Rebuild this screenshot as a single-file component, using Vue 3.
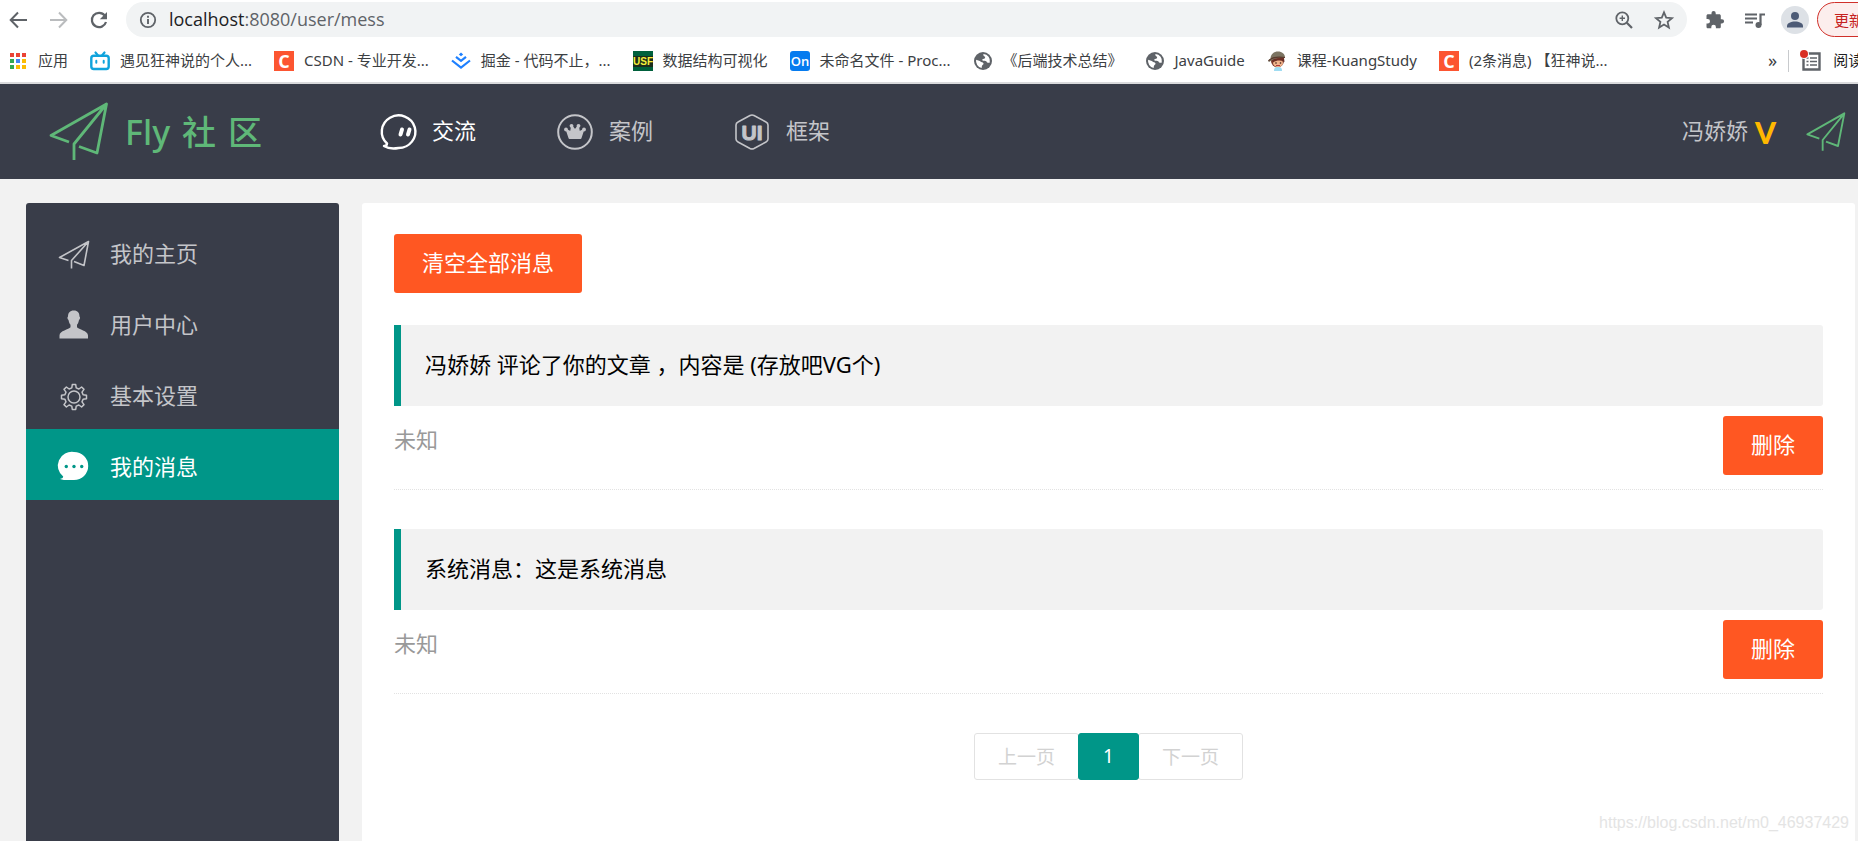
<script setup>
import { ref } from 'vue'

const bookmarks = [
  { icon: 'apps', label: '应用' },
  { icon: 'tv', label: '遇见狂神说的个人...' },
  { icon: 'csdn', label: 'CSDN - 专业开发...' },
  { icon: 'juejin', label: '掘金 - 代码不止，...' },
  { icon: 'usf', label: '数据结构可视化' },
  { icon: 'on', label: '未命名文件 - Proc...' },
  { icon: 'globe', label: '《后端技术总结》' },
  { icon: 'globe', label: 'JavaGuide' },
  { icon: 'boy', label: '课程-KuangStudy' },
  { icon: 'csdn', label: '(2条消息) 【狂神说...' }
]

const appColors = ['#ea4335', '#ea4335', '#ea4335', '#34a853', '#4285f4', '#fbbc04', '#34a853', '#fbbc04', '#fbbc04']

const sideItems = [
  { icon: 'plane', label: '我的主页' },
  { icon: 'user', label: '用户中心' },
  { icon: 'gear', label: '基本设置' },
  { icon: 'chat', label: '我的消息', active: true }
]

const messages = ref([
  { id: 1, text: '冯娇娇 评论了你的文章 ，内容是 (存放吧VG个)', time: '未知' },
  { id: 2, text: '系统消息：这是系统消息', time: '未知' }
])

function remove(id) {
  messages.value = messages.value.filter((m) => m.id !== id)
}

function gearPath(cx, cy, outer, inner) {
  const teeth = 8
  const step = (Math.PI * 2) / teeth
  const pts = []
  for (let i = 0; i < teeth; i++) {
    const a = i * step - Math.PI / 2
    for (const [off, r] of [[-0.3, inner], [-0.17, outer], [0.17, outer], [0.3, inner]]) {
      const t = a + off * step
      pts.push(`${(cx + r * Math.cos(t)).toFixed(1)} ${(cy + r * Math.sin(t)).toFixed(1)}`)
    }
  }
  return `M${pts.join('L')}Z`
}
const gear = gearPath(16, 16, 12.6, 9.4)
</script>

<template>
  <div class="window">
    <div class="browser">
      <div class="toolbar">
        <div class="nav-buttons">
          <button class="icon-btn" aria-label="后退">
            <svg viewBox="0 0 20 20"><path d="M19 10H3M10 2.5L2.7 10l7.3 7.5" fill="none" stroke="#5f6368" stroke-width="2" /></svg>
          </button>
          <button class="icon-btn" aria-label="前进">
            <svg viewBox="0 0 20 20"><path d="M2 10h16M11 2.5l7.3 7.5-7.3 7.5" fill="none" stroke="#babcbe" stroke-width="2" /></svg>
          </button>
          <button class="icon-btn" aria-label="重新加载">
            <svg viewBox="0 0 20 20"><path d="M16.8 5.6A7.2 7.2 0 1 0 18 12" fill="none" stroke="#5f6368" stroke-width="2.2" /><path d="M19 2v7.2h-7.2z" fill="#5f6368" /></svg>
          </button>
        </div>
        <div class="omnibox">
          <svg class="info" viewBox="0 0 18 18"><circle cx="9" cy="9" r="7.2" fill="none" stroke="#5f6368" stroke-width="1.8" /><path d="M9 8v5M9 4.8v2" stroke="#5f6368" stroke-width="1.9" /></svg>
          <div class="address"><span class="host">localhost</span><span>:8080/user/mess</span></div>
          <button class="icon-btn" aria-label="缩放">
            <svg viewBox="0 0 20 20" fill="none" stroke="#5f6368"><circle cx="8.3" cy="8.3" r="6" stroke-width="1.8" /><path d="M12.8 12.8l5.2 5.2" stroke-width="2.2" /><path d="M5.6 8.3h5.4M8.3 5.6v5.4" stroke-width="1.4" /></svg>
          </button>
          <button class="icon-btn" aria-label="为此标签页添加书签">
            <svg viewBox="0 0 20 20"><path d="M10 2.3l2.2 5.3 5.8.5-4.4 3.8 1.3 5.7L10 14.6l-4.9 3 1.3-5.7L2 8.1l5.8-.5z" fill="none" stroke="#5f6368" stroke-width="1.8" /></svg>
          </button>
        </div>
        <div class="tools">
          <button class="icon-btn" aria-label="扩展程序">
            <svg viewBox="0 0 20 20"><path d="M17 9.200h-1.200V5.800c0-.9-.7-1.600-1.600-1.600h-3.500V3a2.100 2.100 0 0 0-4.200 0v1.200H3.100c-.9 0-1.600.7-1.600 1.600v3.100h1.200a2.300 2.300 0 0 1 0 4.600H1.500v3.200c0 .9.700 1.600 1.600 1.600h3.200v-1.200a2.300 2.300 0 0 1 4.600 0v1.200h3.300c.9 0 1.600-.7 1.600-1.600v-3.300H17a2.100 2.100 0 0 0 0-4.200z" fill="#5f6368" /></svg>
          </button>
          <button class="icon-btn" aria-label="媒体控制">
            <svg viewBox="0 0 20 20"><path d="M0 4.500h12M0 8.500h12M0 12.500h8" stroke="#5f6368" stroke-width="2" /><path d="M15.500 15V4.500h4.500" fill="none" stroke="#5f6368" stroke-width="2.200" /><circle cx="13.500" cy="15" r="3" fill="#5f6368" /></svg>
          </button>
          <button class="avatar" aria-label="个人资料">
            <svg viewBox="0 0 28 28"><circle cx="14" cy="14" r="14" fill="#dde1e6" /><circle cx="14" cy="10" r="4" fill="#4d5b76" /><path d="M6 21.500v-1.500c0-3 4-4.500 8-4.500s8 1.500 8 4.500v1.500z" fill="#4d5b76" /></svg>
          </button>
          <button class="update">更新</button>
        </div>
      </div>

      <nav class="bookmarks">
        <a v-for="b in bookmarks" :key="b.label" href="#" class="bookmark">
          <svg viewBox="0 0 20 20">
            <template v-if="b.icon === 'apps'">
              <rect v-for="(c, i) in appColors" :key="i" :x="2 + (i % 3) * 6" :y="2 + Math.floor(i / 3) * 6" width="4" height="4" :fill="c" />
            </template>
            <g v-else-if="b.icon === 'tv'" fill="none" stroke="#0fa3dc" stroke-linecap="round">
              <rect x="1.300" y="4.800" width="17.400" height="13.200" rx="2.500" stroke-width="2.400" />
              <path d="M5.500 1.500l2.500 3M14.500 1.500l-2.500 3" stroke-width="2.200" />
              <path d="M6.300 9.800v2M13.700 9.800v2" stroke-width="2" />
            </g>
            <g v-else-if="b.icon === 'csdn'">
              <rect width="20" height="20" fill="#fc5531" />
              <text x="10" y="16.500" text-anchor="middle" fill="#fff" class="mark-c">C</text>
            </g>
            <g v-else-if="b.icon === 'juejin'" fill="none" stroke="#1e80ff" stroke-width="2.200">
              <path d="M10 1.500l2.200 2-2.200 1.800-2.200-1.800z" fill="#1e80ff" stroke="none" />
              <path d="M5 5.800l5 4 5-4M1 9.500l9 7.200 9-7.200" />
            </g>
            <g v-else-if="b.icon === 'usf'">
              <rect width="20" height="20" fill="#00603c" />
              <rect y="5" width="20" height="11" fill="#1c2d1c" />
              <text x="10" y="14" text-anchor="middle" fill="#f5f03a" class="mark-usf">USF</text>
            </g>
            <g v-else-if="b.icon === 'on'">
              <rect width="20" height="20" rx="3" fill="#067bef" />
              <text x="10" y="15" text-anchor="middle" fill="#fff" class="mark-on">On</text>
            </g>
            <g v-else-if="b.icon === 'globe'">
              <circle cx="10" cy="10" r="9" fill="#5f6368" />
              <path d="M10.500 3a7 7 0 0 1 6.300 8.500c-1.500.8-2.800.2-3.500-1.200-.9-.6-2.500-.2-3.800-.8-.7-1 .2-1.700 1.500-1.800 1.100-.3 1.200-1.200 1.100-2C10.500 5.400 10 4 10.500 3zM3.100 8.800l3.700 1.300c.8.800 1.800 1.200 3 1.400 1.200.8.900 1.900-.3 2.400-.8.800-.6 1.800-.9 3A7 7 0 0 1 3.100 8.800z" fill="#fff" />
            </g>
            <g v-else>
              <circle cx="10.500" cy="10" r="6.500" fill="#7d3a2b" />
              <ellipse cx="11" cy="12" rx="5" ry="4" fill="#f2b48c" />
              <path d="M5 8l12-1 .5 4C14 9 10 9 6 11.500z" fill="#6b2f25" />
              <path d="M3.500 8C3.500 3 7 .5 11 .5S18 3 18 6.500l-5 0-6 1.500-5 3c-1.500-1.500 0-3 1.500-3z" fill="#7c7462" />
              <path d="M1.500 10c3-4 9-4.500 16.500-3.500" fill="none" stroke="#5a3a2c" stroke-width="1.200" />
              <circle cx="9" cy="12" r=".8" fill="#3a1c16" /><circle cx="13.500" cy="12" r=".8" fill="#3a1c16" />
              <path d="M9 14.500h4" stroke="#b03a3a" />
              <path d="M7 20c0-3 1-4 4-4s4 1 4 4z" fill="#9fdcf2" />
            </g>
          </svg>
          <span>{{ b.label }}</span>
        </a>
        <div class="reading">
          <button class="more" aria-label="更多书签">»</button>
          <button class="reading-list">
            <svg viewBox="0 0 22 22"><path d="M3.500 3.500h16v16h-16z" fill="none" stroke="#5f6368" stroke-width="2.400" /><path d="M10 8h7M10 11.500h7M10 15h7M6.500 8h2M6.500 11.500h2M6.500 15h2" stroke="#5f6368" stroke-width="1.600" /><circle cx="4" cy="4" r="5" fill="#fff" /><circle cx="4" cy="4" r="4" fill="#d93025" /></svg>
            <span>阅读</span>
          </button>
        </div>
      </nav>
    </div>

    <header class="header">
      <a href="#" class="logo">
        <svg viewBox="0 0 60 60"><path d="M20 40L2 33.500 57.500 2 48 51 30 44.500M25 58V42L57.500 2" fill="none" stroke="#5fb878" stroke-width="2.800" stroke-linejoin="round" /></svg>
        <span>Fly</span><span>社</span><span>区</span>
      </a>
      <nav class="menu">
        <a href="#" class="menu-item active">
          <svg viewBox="0 0 36 36" fill="none" stroke="currentColor" stroke-linecap="round" stroke-linejoin="round">
            <path d="M7 29.500A16.800 16.300 0 1 1 18.500 34C13 35 8 34.500 4 32c2 0 3-1 3-2.500" stroke-width="2.400" />
            <path d="M22 15.500l-1.500 5M29.500 15.500L28 20.500" stroke-width="4" />
          </svg>
          <span>交流</span>
        </a>
        <a href="#" class="menu-item">
          <svg viewBox="0 0 36 36">
            <circle cx="18" cy="18" r="16.800" fill="none" stroke="currentColor" stroke-width="2" />
            <path d="M12.500 24L10 16.500l4 2 1-6 3 4 3-4 1 6 4-2L23.500 24z" fill="currentColor" stroke="currentColor" stroke-width="2" stroke-linejoin="round" />
            <g fill="currentColor"><circle cx="9" cy="15.500" r="1.900" /><circle cx="14.500" cy="11.800" r="1.900" /><circle cx="21.500" cy="11.800" r="1.900" /><circle cx="27" cy="15.500" r="1.900" /></g>
          </svg>
          <span>案例</span>
        </a>
        <a href="#" class="menu-item">
          <svg viewBox="0 0 36 36">
            <path d="M16 1.500q2-1 4 0l12 6.500q2 1 2 3v14q0 2-2 3l-12 6.500q-2 1-4 0l-12-6.500q-2-1-2-3V11q0-2 2-3z" fill="none" stroke="currentColor" stroke-width="1.600" />
            <text x="18" y="25.500" text-anchor="middle" class="mark-ui">UI</text>
          </svg>
          <span>框架</span>
        </a>
      </nav>
      <div class="account">
        <a href="#" class="user"><span>冯娇娇</span><b class="vip">V</b></a>
        <a href="#" class="user-pic" aria-label="头像">
          <svg viewBox="0 0 60 60"><path d="M20 40L2 33.500 57.500 2 48 51 30 44.500M25 58V42L57.500 2" fill="none" stroke="#5fb878" stroke-width="2.800" stroke-linejoin="round" /></svg>
        </a>
      </div>
    </header>

    <main class="page">
      <nav class="side">
        <a v-for="s in sideItems" :key="s.label" href="#" class="side-item" :class="{ active: s.active }">
          <svg viewBox="0 0 32 32">
            <path v-if="s.icon === 'plane'" d="M10.500 21.500L1.500 18.500 30.500 2.500 26 26.500 16 22.500M13.500 29.500V21.500L30.500 2.500" fill="none" stroke="currentColor" stroke-width="1.600" stroke-linejoin="round" />
            <path v-else-if="s.icon === 'user'" d="M15.800.5c4 0 5.700 2.500 5.700 6 1 .5.600 3-.5 3.500-.4 2.300-1.200 3.800-2 4.800v2.400c1.500 2.300 11 3.300 11 8.300v3H1.500v-3c0-5 9.500-6 11-8.300v-2.400c-.8-1-1.600-2.500-2-4.800-1.100-.5-1.500-3-.5-3.500 0-3.500 1.800-6 5.800-6z" fill="currentColor" />
            <g v-else-if="s.icon === 'gear'" fill="none" stroke="currentColor" stroke-width="1.500" stroke-linejoin="round">
              <path :d="gear" /><circle cx="16" cy="16" r="6" />
            </g>
            <template v-else>
              <path d="M16 0a14 13.800 0 0 1 0 28C11 28 6 28.500 2 27c2-.5 3-1 3.200-2.500A14 13.800 0 0 1 16 0z" fill="currentColor" />
              <g fill="#009688"><circle cx="8.300" cy="14.500" r="1.700" /><circle cx="16" cy="14.500" r="1.700" /><circle cx="23.700" cy="14.500" r="1.700" /></g>
            </template>
          </svg>
          <span>{{ s.label }}</span>
        </a>
      </nav>

      <section class="panel">
        <button class="btn" @click="messages = []">清空全部消息</button>
        <ul class="messages">
          <li v-for="m in messages" :key="m.id">
            <blockquote>{{ m.text }}</blockquote>
            <div class="meta">
              <span>{{ m.time }}</span>
              <button class="btn" @click="remove(m.id)">删除</button>
            </div>
          </li>
        </ul>
        <div class="pager">
          <button disabled>上一页</button>
          <button class="current">1</button>
          <button disabled>下一页</button>
        </div>
        <div class="watermark">https://blog.csdn.net/m0_46937429</div>
      </section>
    </main>
  </div>
</template>

<style>
body {
  margin: 0;
  background: #f2f2f2;
}
</style>

<style scoped>
* {
  box-sizing: border-box;
}
.window {
  display: flex;
  flex-direction: column;
  min-height: 100vh;
  overflow: hidden;
  font-family: "Noto Sans", "Noto Sans CJK SC", sans-serif;
  font-size: 22px;
  white-space: nowrap;
}
a {
  color: inherit;
  text-decoration: none;
}
button {
  margin: 0;
  padding: 0;
  border: 0;
  background: none;
  font: inherit;
  color: inherit;
  cursor: pointer;
}
svg {
  display: block;
  flex: none;
  overflow: visible;
}

/* browser bar */
.browser {
  background: #fff;
  border-bottom: 2px solid #d9dadc;
  color: #3c4043;
  font-size: 15px;
}
.toolbar {
  display: flex;
  align-items: center;
  gap: 18px;
  height: 39px;
  padding-left: 8px;
}
.nav-buttons {
  display: flex;
  gap: 20px;
}
.icon-btn,
.icon-btn svg {
  display: block;
  flex: none;
  width: 20px;
  height: 20px;
}
.omnibox {
  display: flex;
  flex: 1;
  align-items: center;
  gap: 20px;
  height: 35px;
  padding: 0 13px;
  border-radius: 18px;
  background: #f1f3f4;
}
.info {
  width: 18px;
  height: 18px;
}
.address {
  flex: 1;
  margin-left: -8px;
  padding-bottom: 2px;
  color: #5f6368;
  font-family: "Open Sans", sans-serif;
  font-size: 18px;
  line-height: 24px;
}
.host {
  color: #202124;
}
.tools {
  display: flex;
  align-items: center;
  width: 153px;
  overflow: hidden;
}
.tools .icon-btn {
  margin-right: 20px;
}
.tools .icon-btn + .icon-btn {
  margin-right: 16px;
}
.avatar {
  flex: none;
  width: 28px;
  height: 28px;
  margin-right: 8px;
}
.update {
  flex: none;
  width: 80px;
  height: 35px;
  padding-left: 16px;
  border: 1px solid #d0302a;
  border-radius: 18px;
  background: #fceeed;
  color: #c5221f;
  text-align: left;
}
.bookmarks {
  display: flex;
  align-items: center;
  gap: 22px;
  height: 43px;
  padding-left: 8px;
  line-height: 20px;
}
.bookmark {
  display: flex;
  align-items: center;
  gap: 10px;
}
.bookmark span,
.reading-list span {
  padding-bottom: 2px;
}
.bookmark svg {
  width: 20px;
  height: 20px;
}
.mark-c {
  font: 700 18px "Open Sans", sans-serif;
}
.mark-usf {
  font: 700 10px "Liberation Sans Narrow", "Liberation Sans", sans-serif;
}
.mark-on {
  font: 600 13px "Open Sans", sans-serif;
}
.reading {
  display: flex;
  align-items: center;
  width: 90px;
  margin-left: auto;
  overflow: hidden;
}
.more {
  width: 12px;
  margin-right: 11px;
  padding-bottom: 2px;
  font-size: 18px;
  line-height: 20px;
}
.reading-list {
  display: flex;
  align-items: center;
  gap: 11px;
  padding-left: 11px;
  border-left: 1px solid #c8cacd;
  color: #202124;
}
.reading-list svg {
  width: 22px;
  height: 22px;
}

/* site header */
.header {
  display: flex;
  align-items: center;
  height: 95px;
  padding: 0 12px 0 49px;
  background: #393d49;
  color: #c4c5c9;
}
.logo {
  display: flex;
  align-items: center;
  gap: 12px;
  width: 331px;
  color: #5fb878;
  font-size: 34px;
  font-weight: 500;
  line-height: 40px;
}
.logo svg {
  width: 60px;
  height: 60px;
  margin-right: 4px;
}
.menu {
  display: flex;
  gap: 81px;
}
.menu-item {
  display: flex;
  align-items: center;
  gap: 16px;
  line-height: 32px;
}
.menu-item span {
  padding-bottom: 4px;
}
.menu-item svg {
  width: 36px;
  height: 36px;
}
.menu-item.active {
  color: #fff;
}
.mark-ui {
  font: 700 21px "Liberation Sans", sans-serif;
  fill: currentColor;
  stroke: currentColor;
  stroke-width: 1;
  stroke-linejoin: round;
}
.account {
  display: flex;
  align-items: center;
  gap: 30px;
  margin-left: auto;
}
.user {
  display: flex;
  align-items: center;
  gap: 7px;
  line-height: 32px;
}
.user span {
  padding-bottom: 4px;
}
.vip {
  color: #ffb800;
  font-family: Lato, sans-serif;
  font-size: 30px;
  font-weight: 900;
  line-height: 32px;
}
.user-pic svg {
  width: 40px;
  height: 40px;
}

/* page */
.page {
  display: flex;
  flex: 1;
  gap: 23px;
  padding: 24px 3px 0 26px;
  background: #f2f2f2;
}
.side {
  flex: none;
  width: 313px;
  padding-top: 13px;
  border-radius: 3px 3px 0 0;
  background: #393d49;
  color: #c4c5c9;
}
.side-item {
  display: flex;
  align-items: center;
  gap: 20px;
  height: 71px;
  padding-left: 32px;
}
.side-item svg {
  width: 32px;
  height: 32px;
  margin-top: 6px;
}
.side-item.active {
  background: #009688;
  color: #fff;
}
.panel {
  position: relative;
  flex: 1;
  padding: 31px 32px 0;
  border-radius: 3px 3px 0 0;
  background: #fff;
}
.btn {
  height: 59px;
  padding: 0 28px 3px;
  border-radius: 3px;
  background: #ff5722;
  color: #fff;
  line-height: 56px;
}
.messages {
  margin: 32px 0 0;
  padding: 0;
  list-style: none;
}
.messages li {
  margin-bottom: 39px;
  border-bottom: 1px dotted #e2e2e2;
}
blockquote {
  margin: 0 0 10px;
  padding: 23px 24px 25px;
  border-left: 7px solid #009688;
  border-radius: 0 3px 3px 0;
  background: #f2f2f2;
  color: #000;
  line-height: 33px;
}
.meta {
  display: flex;
  justify-content: space-between;
  height: 73px;
  color: #999;
  line-height: 46px;
}
.pager {
  display: flex;
  justify-content: center;
  font-size: 19px;
}
.pager button {
  height: 47px;
  padding: 0 23px 2px;
  border: 1px solid #e2e2e2;
  border-radius: 3px;
  color: #d2d2d2;
}
.pager .current {
  width: 61px;
  margin: 0 -1px;
  border-color: #009688;
  background: #009688;
  color: #fff;
  z-index: 1;
}
.watermark {
  position: absolute;
  right: 6px;
  bottom: 8px;
  color: #e4e4e4;
  font: 16px/20px "Liberation Sans", sans-serif;
}
</style>
